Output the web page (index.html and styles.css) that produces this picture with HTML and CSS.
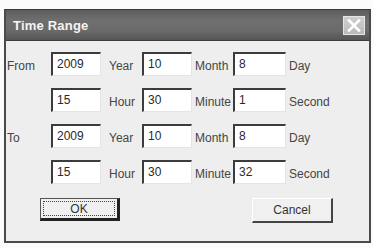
FILE: index.html
```html
<!DOCTYPE html>
<html>
<head>
<meta charset="utf-8">
<link rel="stylesheet" href="styles.css">
</head>
<body>
<div class="dialog">
  <div class="titlebar">
    <span class="title">Time Range</span>
    <span class="close"><svg width="14" height="13" viewBox="0 0 14 13"><path d="M2 1.5 L12 11.5 M12 1.5 L2 11.5" stroke="#fff" stroke-width="2.6" stroke-linecap="square"/></svg></span>
  </div>
  <div class="body">
    <div class="form">
      <span class="lbl lead">From</span>
      <span class="field">2009</span>
      <span class="lbl wide">Year</span>
      <span class="field">10</span>
      <span class="lbl">Month</span>
      <span class="field">8</span>
      <span class="lbl">Day</span>

      <span class="lbl lead"></span>
      <span class="field">15</span>
      <span class="lbl wide">Hour</span>
      <span class="field">30</span>
      <span class="lbl">Minute</span>
      <span class="field">1</span>
      <span class="lbl">Second</span>

      <span class="lbl lead">To</span>
      <span class="field">2009</span>
      <span class="lbl wide">Year</span>
      <span class="field">10</span>
      <span class="lbl">Month</span>
      <span class="field">8</span>
      <span class="lbl">Day</span>

      <span class="lbl lead"></span>
      <span class="field">15</span>
      <span class="lbl wide">Hour</span>
      <span class="field">30</span>
      <span class="lbl">Minute</span>
      <span class="field">32</span>
      <span class="lbl">Second</span>
    </div>
    <div class="buttons">
      <button class="btn ok"><span class="focus">OK</span></button>
      <button class="btn cancel">Cancel</button>
    </div>
  </div>
</div>
</body>
</html>
```
FILE: styles.css
```css
html, body {
  margin: 0;
  padding: 0;
  background: #fbfbfb;
}
body {
  font-family: "Liberation Sans", Arial, sans-serif;
  font-size: 12px;
  color: #3a3a3a;
}
.dialog {
  margin: 9px 2px 0 4px;
  width: 367px;
  height: 234px;
  box-sizing: border-box;
  display: flex;
  flex-direction: column;
  background: #eeeeee;
  border: 2px solid #4a4a4a;
  border-top: 1px solid #3a3a3a;
}
.titlebar {
  height: 30px;
  display: flex;
  align-items: center;
  justify-content: space-between;
  padding: 0 4px 0 7px;
  background: linear-gradient(#5c5c5c, #6f6f6f 35%, #6a6a6a 70%, #555 100%);
  border-bottom: 1px solid #3e3e3e;
}
.title {
  color: #f4f4f4;
  font-size: 13px;
  font-weight: bold;
  letter-spacing: 0.2px;
}
.close {
  width: 22px;
  height: 19px;
  box-sizing: border-box;
  display: flex;
  align-items: center;
  justify-content: center;
  background: linear-gradient(#cfcfcf, #b9b9b9);
  border: 1px solid #e6e6e6;
}
.body {
  flex: 1;
  padding: 11px 0 0 0;
}
.form {
  display: grid;
  grid-template-columns: 45px 50px 41px 50px 41px 53px auto;
  grid-auto-rows: 24px;
  row-gap: 12px;
}
.lbl {
  display: flex;
  align-items: center;
  padding: 3px 0 0 3px;
  color: #454545;
}
.lbl.lead {
  padding-left: 1px;
}
.lbl.wide {
  padding-left: 8px;
}
.field {
  background: #fff;
  box-sizing: border-box;
  border-top: 2px solid #3c3c3c;
  border-left: 2px solid #3c3c3c;
  border-right: 1px solid #e4e4e4;
  border-bottom: 1px solid #e4e4e4;
  padding: 3px 0 0 4px;
  color: #2a2a2a;
  font-size: 12px;
}
.buttons {
  display: flex;
  justify-content: space-between;
  align-items: flex-start;
  margin-top: 14px;
  padding: 0 36px 0 34px;
}
.btn {
  font-family: "Liberation Sans", Arial, sans-serif;
  font-size: 12px;
  color: #333;
  background: #f0f0f0;
  padding: 0;
  box-sizing: border-box;
}
.ok {
  width: 80px;
  height: 23px;
  border: 1px solid #555;
  border-right: 3px solid #222;
  border-bottom: 3px solid #222;
  padding: 2px;
}
.ok .focus {
  display: flex;
  align-items: center;
  justify-content: center;
  height: 100%;
  border: 1px dotted #444;
  box-sizing: border-box;
}
.cancel {
  width: 81px;
  height: 25px;
  border: 1px solid #fff;
  border-right: 2px solid #444;
  border-bottom: 2px solid #444;
}
```
